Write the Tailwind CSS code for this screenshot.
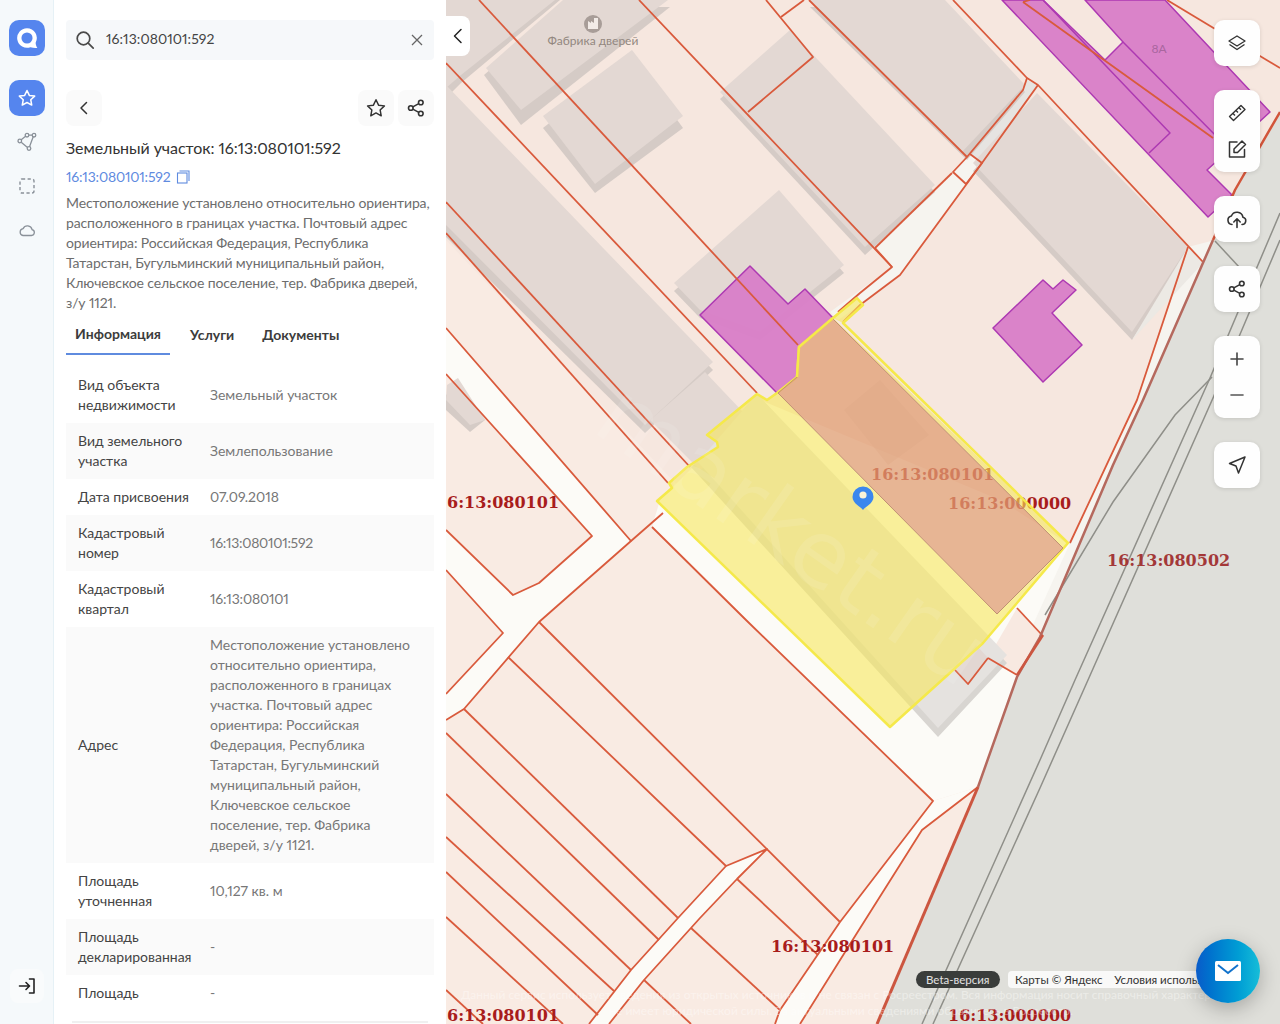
<!DOCTYPE html>
<html lang="ru">
<head>
<meta charset="utf-8">
<script src="https://cdn.jsdelivr.net/npm/@tailwindcss/browser@4"></script>
<title>Участок</title>
</head>
<body class="overflow-hidden bg-white">
<div class="flex h-[1024px] w-[1280px] overflow-hidden font-['Lato','Open_Sans',sans-serif] text-[14px] leading-5 text-[#3a3a3a] proportional-nums">
  <!-- left nav -->
  <nav class="flex w-[54px] shrink-0 flex-col items-center border-r border-[#e6f1f6] bg-[#f5f9fb] pt-5 pb-[21px]">
    <div class="flex h-9 w-9 items-center justify-center rounded-[10px] bg-[#5585ee]">
      <svg width="30" height="30" viewBox="0 0 26 26" fill="none"><path d="M13 4.500a8.500 8.500 0 1 0 3 16.450c2 .5 4 1 6 .6-1-1.500-1.500-3-1.500-4.500A8.500 8.500 0 0 0 13 4.500Z" fill="#fff"/><circle cx="13" cy="13" r="4.800" fill="#5585ee"/></svg>
    </div>
    <div class="mt-6 flex h-9 w-9 items-center justify-center rounded-[10px] bg-[#5585ee]">
      <svg width="20" height="20" viewBox="0 0 24 24" fill="none" stroke="#fff" stroke-width="1.800" stroke-linejoin="round"><path d="m12 3 2.800 5.900 6.400.8-4.700 4.400 1.200 6.400L12 17.400l-5.700 3.100 1.200-6.400-4.700-4.400 6.400-.8Z"/></svg>
    </div>
    <div class="mt-2 flex h-9 w-9 items-center justify-center">
      <svg width="20" height="20" viewBox="0 0 20 20" fill="none" stroke="#8a9199" stroke-width="1.300"><circle cx="2.800" cy="9" r="1.800"/><circle cx="10" cy="3.200" r="1.800"/><circle cx="17" cy="3.200" r="1.800"/><circle cx="12" cy="16.500" r="1.800"/><path d="m4.200 7.800 4.400-3.600M11.800 3.200h3.400M16.200 4.800l-3.700 10M10.500 15.500 4.200 10.200"/></svg>
    </div>
    <div class="mt-2 flex h-9 w-9 items-center justify-center">
      <svg width="18" height="18" viewBox="0 0 18 18" fill="none" stroke="#8a9199" stroke-width="1.400" stroke-dasharray="3.200 2.400"><rect x="2" y="2" width="14" height="14" rx="2"/></svg>
    </div>
    <div class="mt-2 flex h-9 w-9 items-center justify-center">
      <svg width="18" height="18" viewBox="0 0 18 18" fill="none" stroke="#8a9199" stroke-width="1.300"><path d="M5 14.500h8.500a3 3 0 0 0 .6-5.900 4.800 4.800 0 0 0-9-1A3.500 3.500 0 0 0 5 14.500Z"/></svg>
    </div>
    <div class="mt-auto flex h-[34px] w-[34px] items-center justify-center rounded-lg bg-[#f9fbfc]">
      <svg width="20" height="20" viewBox="0 0 20 20" fill="none" stroke="#222" stroke-width="1.600" stroke-linecap="round" stroke-linejoin="round"><path d="M2.500 10h9.500M9 6.500l3.500 3.500L9 13.500M12.500 3h4.500v14h-4.500"/></svg>
    </div>
  </nav>

  <!-- side panel -->
  <aside class="w-[392px] shrink-0 overflow-hidden bg-white px-3 pt-5">
    <div class="flex h-10 items-center rounded bg-[#f6f8fa] pr-[10px] pl-2">
      <svg width="22" height="22" viewBox="0 0 22 22" fill="none" stroke="#4a4a4a" stroke-width="1.700" stroke-linecap="round"><circle cx="9.500" cy="9.500" r="6.300"/><path d="m14.200 14.200 5 5"/></svg>
      <span class="ml-[10px] pb-[2px] text-[14px] tracking-[0.05px] text-[#444]">16:13:080101:592</span>
      <svg class="ml-auto" width="14" height="14" viewBox="0 0 14 14" fill="none" stroke="#666" stroke-width="1.300"><path d="m2 2 10 10M12 2 2 12"/></svg>
    </div>
    <div class="mt-[30px] flex items-center">
      <div class="flex h-9 w-9 items-center justify-center rounded-lg bg-[#fafafa]">
        <svg width="16" height="16" viewBox="0 0 16 16" fill="none" stroke="#333" stroke-width="1.500" stroke-linecap="round" stroke-linejoin="round"><path d="M10.500 2.500 5 8l5.500 5.500"/></svg>
      </div>
      <div class="ml-auto flex h-9 w-9 items-center justify-center rounded-lg bg-[#fafafa]">
        <svg width="22" height="22" viewBox="0 0 24 24" fill="none" stroke="#333" stroke-width="1.600" stroke-linejoin="round"><path d="m12 3 2.800 5.900 6.400.8-4.700 4.400 1.200 6.400L12 17.400l-5.700 3.100 1.200-6.400-4.700-4.400 6.400-.8Z"/></svg>
      </div>
      <div class="ml-1 flex h-9 w-9 items-center justify-center rounded-lg bg-[#fafafa]">
        <svg width="18" height="18" viewBox="0 0 18 18" fill="none" stroke="#333" stroke-width="1.600"><circle cx="3.800" cy="9" r="2.300"/><circle cx="13.800" cy="3.500" r="2.300"/><circle cx="13.800" cy="14.500" r="2.300"/><path d="m5.800 7.900 6-3.300M5.800 10.100l6 3.300"/></svg>
      </div>
    </div>
    <h1 class="mt-[10px] text-[16px] leading-6 font-normal tracking-[-0.05px] text-[#333]">Земельный участок: 16:13:080101:592</h1>
    <div class="mt-[7px] flex items-center text-[14px] tracking-[-0.2px] text-[#5f8bdf]">16:13:080101:592
      <svg class="ml-[5px]" width="14" height="14" viewBox="0 0 14 14" fill="none" stroke="#5f8bdf" stroke-width="1.100"><rect x="1.500" y="3" width="9.500" height="10"/><path d="M3.500 1h9.500v10"/></svg>
    </div>
    <p class="mt-[6px] text-[14px] leading-5 tracking-[-0.12px] text-[#6d6d6d]">Местоположение установлено относительно ориентира, расположенного в границах участка. Почтовый адрес ориентира: Российская Федерация, Республика Татарстан, Бугульминский муниципальный район, Ключевское сельское поселение, тер. Фабрика дверей, <span class="whitespace-nowrap">з/у 1121.</span></p>
    <div class="mt-[2px] flex h-[40px] items-center text-[14px] font-bold text-[#3c3c3c]">
      <div class="flex h-[40px] w-[104px] items-center justify-center border-b-2 border-[#5f8bdf]">Информация</div>
      <div class="ml-5">Услуги</div>
      <div class="ml-7">Документы</div>
    </div>
    <div class="mt-3 text-[14px] leading-5">
      <div class="flex items-center px-3 py-2"><div class="w-[132px] shrink-0 pr-2 text-[#444]">Вид объекта недвижимости</div><div class="text-[#777]">Земельный участок</div></div>
      <div class="flex items-center bg-[#fafafa] px-3 py-2"><div class="w-[132px] shrink-0 pr-2 text-[#444]">Вид земельного участка</div><div class="text-[#777]">Землепользование</div></div>
      <div class="flex items-center px-3 py-2"><div class="w-[132px] shrink-0 pr-2 text-[#444]">Дата присвоения</div><div class="text-[#777]">07.09.2018</div></div>
      <div class="flex items-center bg-[#fafafa] px-3 py-2"><div class="w-[132px] shrink-0 pr-2 text-[#444]">Кадастровый номер</div><div class="tracking-[-0.3px] text-[#777]">16:13:080101:592</div></div>
      <div class="flex items-center px-3 py-2"><div class="w-[132px] shrink-0 pr-2 text-[#444]">Кадастровый квартал</div><div class="tracking-[-0.2px] text-[#777]">16:13:080101</div></div>
      <div class="flex items-center bg-[#fafafa] px-3 py-2"><div class="w-[132px] shrink-0 pr-2 text-[#444]">Адрес</div><div class="w-[205px] text-[#777]">Местоположение установлено относительно ориентира, расположенного в границах участка. Почтовый адрес ориентира: Российская Федерация, Республика Татарстан, Бугульминский муниципальный район, Ключевское сельское поселение, тер. Фабрика дверей, з/у 1121.</div></div>
      <div class="flex items-center px-3 py-2"><div class="w-[132px] shrink-0 pr-2 text-[#444]">Площадь уточненная</div><div class="text-[#777]">10,127 кв. м</div></div>
      <div class="flex items-center bg-[#fafafa] px-3 py-2"><div class="w-[132px] shrink-0 text-[#444]">Площадь декларированная</div><div class="text-[#777]">-</div></div>
      <div class="flex items-center px-3 pt-2 pb-[18px]"><div class="w-[132px] shrink-0 pr-2 text-[#444]">Площадь</div><div class="text-[#777]">-</div></div>
      <div class="mx-[6px] h-[2px] bg-[#f0f0f0]"></div>
    </div>
  </aside>

  <!-- map -->
  <main class="relative h-[1024px] w-[834px] shrink-0 overflow-hidden bg-[#f9ebe3]">
    <svg class="absolute inset-0 block" width="834" height="1024" viewBox="446 0 834 1024">
      <polygon points="446,0 1280,0 1280,110 1043,635 1017,677 880,700 446,240" fill="#f6e7df"/>
      <g fill="#fcfbf7">
        <polygon points="652,527 933,801 978,787 1017,677 1043,635 1070,545 1000,500 760,400 660,500"/>
        <polygon points="446,328 631,541 539,622 464,709 446,720 446,694 503,633 446,570 446,530 513,595 539,583 592,536 446,374"/>
        <polygon points="727,865 767,849 737,879 700,918 644,980 609,1024 589,1024 631,970 678,918"/>
        <polygon points="933,801 840,922 780,1010 775,1024 800,1024 857,933 922,830 978,787"/>
        <polygon points="892,267 875,248 952,173 1023,90 1027,78 1038,85 982,163 900,275 860,305 838,320 830,312" fill="#f6f4ef"/>
        <polygon points="1188,247 1215,240 1143,400 1113,465 1043,635 1017,660 1070,543 1137,400" fill="#f6f4ef"/>
      </g>
      <polygon points="1027,80 1038,85 982,163 970,155" fill="#e6e4e1"/>
      <polygon points="1017,608 1042,635 1017,675 988,658" fill="#f8e9e1"/>
      <polygon points="1280,110 1235,190 1213,240 1143,400 1113,465 1040,637 1017,677 978,787 877,1024 1280,1024" fill="#dfdfda"/>
      <g fill="none" stroke="#8f8f89" stroke-width="1.500">
        <polyline points="1212,377 1175,415 1113,502 1045,615"/>
        <polyline points="1280,213 1210,378 1075,680 1040,760 922,1024"/>
        <polyline points="1280,240 1213,398 1088,680 1040,788 933,1024"/>
        <polyline points="1215,241 1240,268"/>
      </g>
      <g>
        <g fill="#d5cbc6">
          <polygon points="446,0 560,0 461,83 446,98"/>
          <polygon points="484,75 563,7 670,7 521,125"/>
          <polygon points="543,128 632,58 683,128 595,193"/>
          <polygon points="446,237 446,92 713,370 645,433"/>
          <polygon points="674,291 779,198 844,273 760,340 700,318"/>
          <polygon points="720,99 790,37 935,192 865,255"/>
          <polygon points="810,7 950,7 1025,92 967,160"/>
          <polygon points="973,171 1037,101 1188,255 1132,340"/>
          <polygon points="446,395 460,385 485,420 470,432 446,410"/>
          <polygon points="691,467 700,460 757,394 1007,663 938,737" fill="#d8d5d1"/>
        </g>
        <g fill="#e3d8d3">
          <polygon points="446,0 555,0 461,75 446,88"/>
          <polygon points="486,68 563,0 668,0 521,110"/>
          <polygon points="543,116 632,50 683,116 595,184"/>
          <polygon points="446,85 713,362 645,425 446,225"/>
          <polygon points="650,420 705,372 760,430 700,470"/>
          <polygon points="674,283 779,190 844,265 760,332 700,310"/>
          <polygon points="720,92 790,30 935,185 865,247"/>
          <polygon points="810,0 945,0 1025,85 962,152"/>
          <polygon points="973,163 1037,93 1188,247 1132,332"/>
          <polygon points="447,385 458,378 485,420 470,425 446,400"/>
        </g>
        <polygon points="698,462 757,394 1007,655 938,728" fill="#e5e2df"/>
        <polygon points="955,670 968,684 988,658 976,645" fill="#e2d7d2"/>
        <polygon points="1188,247 1203,263 1132,340" fill="#ece9e4"/>
      </g>
      <circle cx="593" cy="24" r="9" fill="#a89d98"/>
      <path d="M588 29v-8l3 2v-2l3 2v-5h4v11Z" fill="#f2ebe7"/>
      <text x="593" y="45" text-anchor="middle" font-family="Lato,'Open Sans',sans-serif" font-size="12" fill="#928780">Фабрика дверей</text>
      <g fill="#d97fc8" fill-opacity=".96" stroke="#ad39b2" stroke-width="1.500" stroke-linejoin="round">
        <polygon points="700,315 750,266 788,304 805,289 833,318 799,347 797,377 777,393"/>
        <polygon points="993,328 1043,280 1053,289 1063,280 1076,290 1052,313 1082,345 1043,382"/>
        <polygon points="1002,0 1043,0 1105,60 1123,42 1085,0 1165,0 1270,112 1258,123 1240,140 1207,170 1232,195 1208,217"/>
        <polyline points="1043,0 1170,133 1149,153" fill="none"/>
        <polyline points="1123,42 1230,150" fill="none"/>
      </g>
      <text x="1159" y="53" text-anchor="middle" font-family="Lato,'Open Sans',sans-serif" font-size="12" fill="#a9669f">8А</text>
      <g fill="none" stroke="#d95a3c" stroke-width="1.800" stroke-linejoin="round">
        <polyline points="479,0 798,345"/>
        <polyline points="446,63 757,393"/>
        <polyline points="446,202 690,467"/>
        <polyline points="446,233 668,483"/>
        <polyline points="639,0 892,267 860,293 838,312"/>
        <polyline points="875,248 892,267"/>
        <polyline points="766,0 813,57 748,112"/>
        <polyline points="781,17 804,0"/>
        <polyline points="809,0 967,157 953,172 966,184 982,163 970,154"/>
        <polyline points="953,0 1027,78 1023,90 967,157"/>
        <polyline points="952,173 875,248"/>
        <polyline points="1038,85 982,163 900,275 860,305 843,322"/>
        <polyline points="1027,78 1038,85 1203,262"/>
        <polyline points="1188,247 1137,400 1070,543"/>
        <polyline points="1167,0 1280,68"/>
        <polyline points="1023,2 1213,138"/>
        <polyline points="1023,2 1030,0"/>
        <polyline points="446,328 631,541 663,513"/>
        <polyline points="446,374 592,536 539,583 513,595 446,530"/>
        <polyline points="446,570 503,633 446,694"/>
        <polyline points="652,527 746,620 933,801 840,922 780,1010 775,1024"/>
        <polyline points="631,541 539,622 464,709 446,720"/>
        <polyline points="539,622 840,922"/>
        <polyline points="508,657 726,866 767,849 737,879 700,918 644,980 609,1024"/>
        <polyline points="464,709 678,918"/>
        <polyline points="726,866 678,918 631,970 589,1024"/>
        <polyline points="446,733 659,940"/>
        <polyline points="446,794 631,970"/>
        <polyline points="446,837 614,991"/>
        <polyline points="446,872 598,1015"/>
        <polyline points="446,917 563,1024"/>
        <polyline points="446,990 483,1024"/>
        <polyline points="737,879 818,955"/>
        <polyline points="691,928 780,1010"/>
        <polyline points="644,980 691,1024"/>
        <polyline points="978,787 922,830 857,933 800,1024"/>
        <polyline points="1017,608 1042,635"/>
        <polyline points="988,658 1017,675"/>
        <polyline points="955,670 968,684 988,658"/>
      </g>
      <g fill="none" stroke-linejoin="round">
        <polyline points="1213,240 1143,400 1113,465 1040,637 1017,677 978,787" stroke="#b5695e" stroke-width="2.500"/>
        <polyline points="1280,112 1235,190 1213,240" stroke="#d2553a" stroke-width="2.500"/>
        <polyline points="978,787 877,1024" stroke="#cc5640" stroke-width="3"/>
        <polyline points="1043,635 1017,675" stroke="#cc5640" stroke-width="2.500"/>
      </g>
      <polygon points="844,410 880,380 929,435 888,465" fill="#d9c6bd" fill-opacity=".4"/>
      <g font-family="'DejaVu Serif',serif" font-weight="700" font-size="16" fill="#a81c1c">
        <text x="871" y="480">16:13:080101</text>
        <text x="948" y="509">16:13:000000</text>
        <text x="447" y="508">6:13:080101</text>
        <text x="771" y="952">16:13:080101</text>
        <text x="1107" y="566" fill="#a33838">16:13:080502</text>
        <text x="447" y="1021">6:13:080101</text>
        <text x="948" y="1021">16:13:000000</text>
      </g>
      <path fill-rule="evenodd" fill="#f7e85c" fill-opacity=".6" d="M657 501 672 488 669 483 687 467 718 447 717 442 707 435 757 394 767 400 777 393 797 377 799 347 833 318 843 323 863 305 857 298 833 318 1068 543 983 643 890 727Z M778 393 797 377 799 347 833 319 1063 548 997 614Z"/>
      <path fill="none" stroke="#f5e94a" stroke-width="2.500" stroke-linejoin="round" d="M657 501 672 488 669 483 687 467 718 447 717 442 707 435 757 394 767 400 777 393 797 377 799 347 833 318 857 298 863 305 843 323 1068 543 983 643 890 727Z"/>
      <polygon points="778,393 797,377 799,347 833,319 1063,548 997,614" fill="#e09e73" fill-opacity=".75" stroke="#c09073" stroke-width="1"/>
      <polyline points="797,377 799,347 833,318" fill="none" stroke="#f5e94a" stroke-width="2.500"/>
      <text x="590" y="430" transform="rotate(35 590 430)" font-family="'DejaVu Sans',sans-serif" font-size="92" fill="#fff" fill-opacity=".1">market.ru</text>
      <path d="M863 510c-2-3-10.500-6.500-10.500-13a10.500 10.500 0 0 1 21 0c0 6.500-8.500 10-10.500 13Z" fill="#3b87ee"/>
      <circle cx="863" cy="495" r="3.600" fill="#fbf3d8"/>
    </svg>

    <div class="absolute top-4 left-0 flex h-10 w-6 items-center justify-center rounded-r-lg bg-white">
      <svg width="14" height="16" viewBox="0 0 14 16" fill="none" stroke="#222" stroke-width="1.500" stroke-linecap="round" stroke-linejoin="round"><path d="M10 1.500 3.500 8l6.500 6.500"/></svg>
    </div>

    <div class="absolute top-5 right-5 flex w-[46px] flex-col gap-6">
      <div class="flex h-[46px] items-center justify-center rounded-[10px] bg-[#fefefe] shadow-[0_1px_4px_rgba(0,0,0,0.12)]">
        <svg width="20" height="20" viewBox="0 0 20 20" fill="none" stroke="#333" stroke-width="1.400" stroke-linejoin="round"><path d="m10 3 8 5-8 5-8-5Z"/><path d="m2.500 11.500 7.500 5 7.500-5"/></svg>
      </div>
      <div class="flex h-[82px] flex-col items-center justify-center gap-[14px] rounded-[10px] bg-[#fefefe] shadow-[0_1px_4px_rgba(0,0,0,0.12)]">
        <svg width="22" height="22" viewBox="0 0 22 22" fill="none" stroke="#333" stroke-width="1.400" stroke-linejoin="round"><path d="M15 3.500 19 7.500 7.500 18.500 3.500 14.500Z"/><path d="m7 11.500 2 2M10 8.500l2 2M13 5.800l2 2"/></svg>
        <svg width="22" height="22" viewBox="0 0 22 22" fill="none" stroke="#333" stroke-width="1.500" stroke-linecap="round" stroke-linejoin="round"><path d="M11 4H3.500v15h15v-7.500"/><path d="M8 11 16 3l3.500 3.500-8 8H8Z"/></svg>
      </div>
      <div class="flex h-[46px] items-center justify-center rounded-[10px] bg-[#fefefe] shadow-[0_1px_4px_rgba(0,0,0,0.12)]">
        <svg width="22" height="22" viewBox="0 0 22 22" fill="none" stroke="#333" stroke-width="1.600" stroke-linecap="round" stroke-linejoin="round"><path d="M6 16.500a4.300 4.300 0 0 1-.6-8.500 6 6 0 0 1 11.500 1.200 3.700 3.700 0 0 1-.9 7.300"/><path d="M11 19.500v-8.500M7.800 14l3.200-3.200 3.200 3.200"/></svg>
      </div>
      <div class="flex h-[46px] items-center justify-center rounded-[10px] bg-[#fefefe] shadow-[0_1px_4px_rgba(0,0,0,0.12)]">
        <svg width="18" height="18" viewBox="0 0 18 18" fill="none" stroke="#333" stroke-width="1.600"><circle cx="3.800" cy="9" r="2.300"/><circle cx="13.800" cy="3.500" r="2.300"/><circle cx="13.800" cy="14.500" r="2.300"/><path d="m5.800 7.900 6-3.300M5.800 10.100l6 3.300"/></svg>
      </div>
      <div class="flex h-[82px] flex-col items-center justify-center gap-5 rounded-[10px] bg-[#fefefe] shadow-[0_1px_4px_rgba(0,0,0,0.12)]">
        <svg width="16" height="16" viewBox="0 0 16 16" fill="none" stroke="#444" stroke-width="1.600" stroke-linecap="round"><path d="M8 2v12M2 8h12"/></svg>
        <svg width="16" height="16" viewBox="0 0 16 16" fill="none" stroke="#555" stroke-width="1.600" stroke-linecap="round"><path d="M2 8h12"/></svg>
      </div>
      <div class="flex h-[46px] items-center justify-center rounded-[10px] bg-[#fefefe] shadow-[0_1px_4px_rgba(0,0,0,0.12)]">
        <svg width="20" height="20" viewBox="0 0 20 20" fill="none" stroke="#333" stroke-width="1.500" stroke-linejoin="round"><path d="M18 2 2.500 8.500l6.500 2.500 2.500 7Z"/></svg>
      </div>
    </div>

    <div class="absolute top-[971px] left-[470px] flex h-[17px] items-center rounded-full bg-[#3a3d3b] px-[10px] text-[11.500px] text-[#e2e2e2]">Beta-версия</div>
    <div class="absolute top-[971px] left-[562px] flex h-[17px] w-[210px] items-center overflow-hidden rounded-[4px] bg-white/80 px-[7px] text-[11.500px] whitespace-nowrap text-[#333]">Карты © Яндекс&nbsp;&nbsp;&nbsp;&nbsp;Условия использования</div>
    <div class="absolute top-[987px] left-[10px] w-[770px] text-center text-[12px] leading-4 text-white/40">Данный сервис использует сведения из открытых источников и не связан с Росреестром. Вся информация носит справочный характер и не имеет юридической силы. За актуальными сведениями обратитесь в Росреестр.</div>

    <div class="absolute top-[939px] left-[750px] flex h-16 w-16 items-center justify-center rounded-full bg-gradient-to-r from-[#0a5bc9] to-[#17bdd8] shadow-[0_6px_20px_rgba(0,0,0,0.25)]">
      <svg width="26" height="20" viewBox="0 0 26 20"><rect width="26" height="20" rx="1.500" fill="#fff"/><path d="m3 4 10 8 10-8" fill="none" stroke="#1273cc" stroke-width="2"/></svg>
    </div>
  </main>
</div>
</body>
</html>
